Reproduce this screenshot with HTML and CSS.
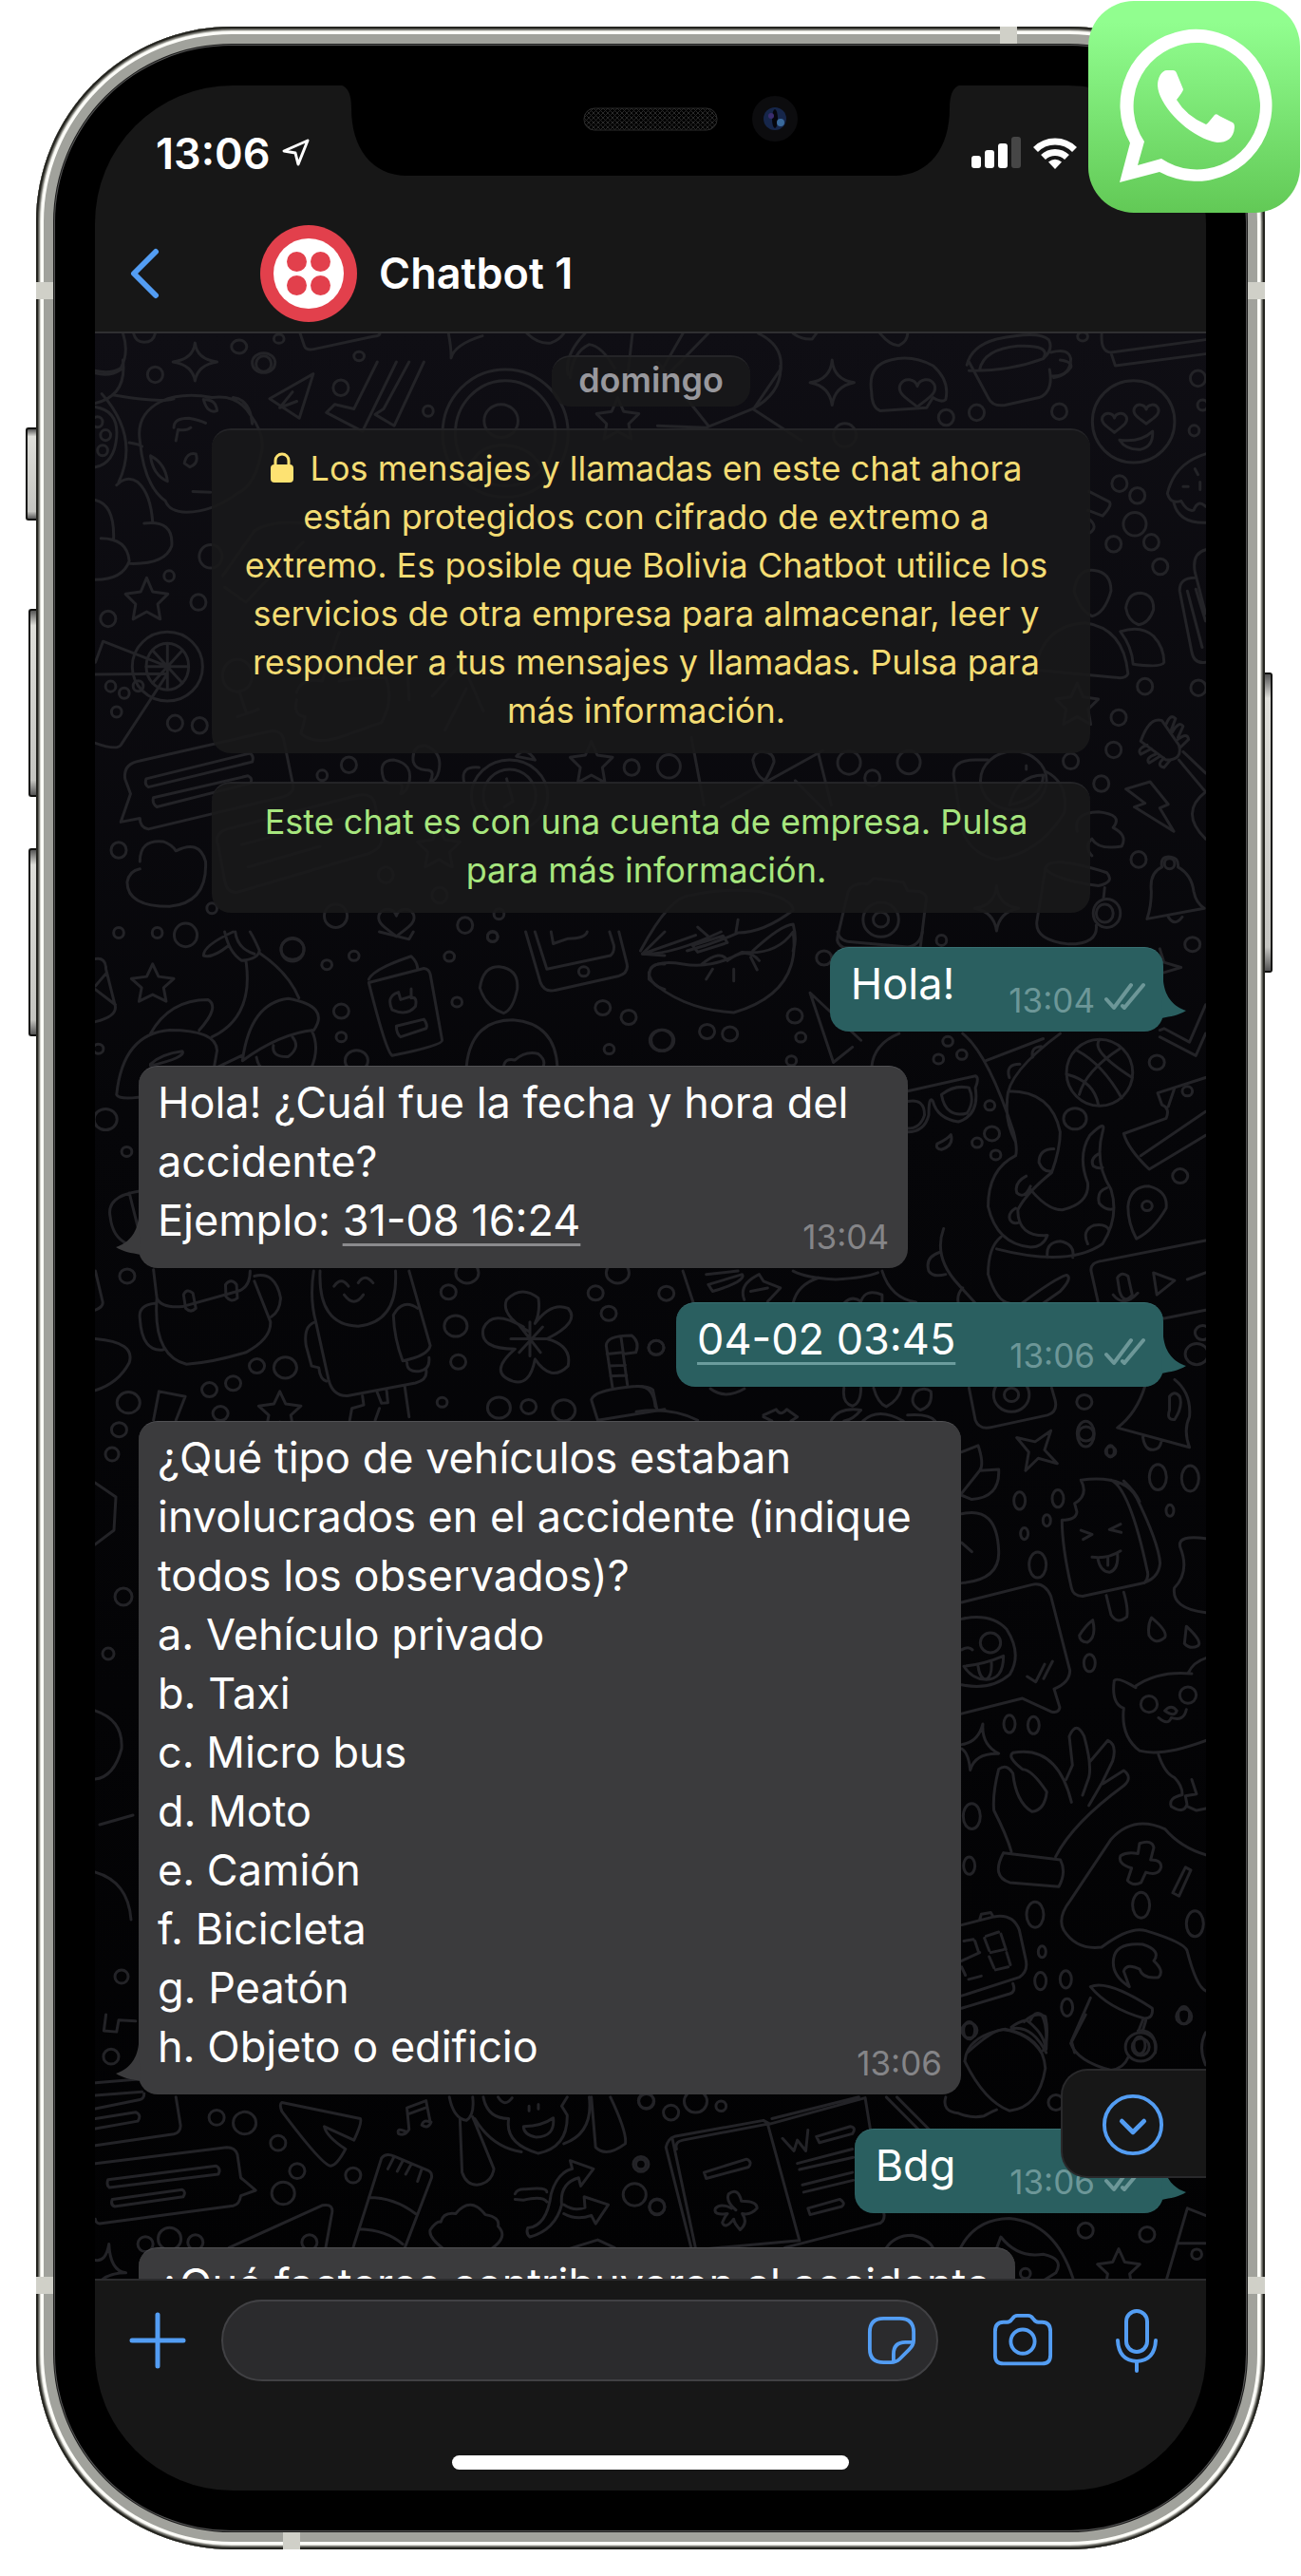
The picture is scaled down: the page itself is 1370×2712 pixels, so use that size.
FILE: index.html
```html
<!DOCTYPE html>
<html lang="es">
<head>
<meta charset="utf-8">
<meta name="viewport" content="width=device-width, initial-scale=1">
<title>Chatbot 1</title>
<link rel="stylesheet" href="styles.css">
</head>
<body>
<main class="stage">
  <div class="phone">
    <i class="key key-mute"></i><i class="key key-up"></i><i class="key key-down"></i><i class="key key-power"></i>
    <i class="band band-top"></i><i class="band band-bottom"></i>
    <i class="band band-left band-high"></i><i class="band band-right band-high"></i>
    <i class="band band-left band-low"></i><i class="band band-right band-low"></i>

    <div class="screen">
      <div class="status">
        <span class="clock">13:06</span>
        <svg class="locate" viewBox="0 0 30 30"><path d="M28 2 3 13 15 15 18 27Z" fill="none" stroke="#fff" stroke-width="3" stroke-linejoin="round"/></svg>
        <svg class="signal" viewBox="0 0 52 34"><g fill="#fff"><rect y="20" width="10" height="13" rx="3"/><rect x="14" y="14" width="10" height="19" rx="3"/><rect x="28" y="7" width="10" height="26" rx="3"/><rect x="42" width="10" height="33" rx="3" fill="#464646"/></g></svg>
        <svg class="wifi" viewBox="0 0 46 34"><g fill="none" stroke="#fff" stroke-width="7"><path d="M2.500 13.500A29 29 0 0 1 43.500 13.500"/><path d="M10.500 21.500A18 18 0 0 1 35.500 21.500"/></g><path d="M16 26.500Q23 21 30 26.500L23 34Z" fill="#fff"/></svg>
      </div>

      <header class="bar">
        <button class="back" aria-label="Atrás"><svg viewBox="0 0 32 54"><path d="M28 4 5 27 28 50" fill="none" stroke="#539df3" stroke-width="6" stroke-linecap="round" stroke-linejoin="round"/></svg></button>
        <svg class="avatar" viewBox="0 0 102 102"><circle cx="51" cy="51" r="51" fill="#e2404c"/><circle cx="51" cy="51" r="37" fill="#fff"/><g fill="#e2404c"><circle cx="38.500" cy="38.500" r="10.500"/><circle cx="63.500" cy="38.500" r="10.500"/><circle cx="38.500" cy="63.500" r="10.500"/><circle cx="63.500" cy="63.500" r="10.500"/></g></svg>
        <h1 class="title">Chatbot 1</h1>
      </header>

      <div class="chat">
        <svg class="wallpaper" viewBox="100 350 1170 2050" preserveAspectRatio="xMidYMin slice" aria-hidden="true">
          <defs>
            <ellipse id="s" rx="12" ry="14"/>
            <ellipse id="m" rx="18" ry="21"/>
            <ellipse id="l" rx="27" ry="31"/>
            <path id="star" d="M0-55 14-18 50-12 26 15 32 55 0 35-32 55-26 15-50-12-14-18Z"/>
            <path id="spark" d="M0-60Q4-8 52 0 6 10 0 60-6 10-52 0-4-8 0-60Z"/>
            <path id="heart" d="M0 40C-20 20-50 5-40-20-30-40-5-35 0-15 5-35 30-40 40-20 50 5 20 20 0 40Z"/>
          </defs>
          <g transform="scale(.4464 .3333)">
            <use href="#spark" x="460" y="1140"/><use href="#m" x="564" y="1092"/><use href="#l" x="622" y="1143"/><use href="#s" x="658" y="1067"/><use href="#s" x="847" y="1122"/>
            <path d="M290 1050Q305 1110 285 1160 260 1180 224 1168M315 1050Q320 1078 340 1078 362 1078 366 1050M708 1050 718 1090Q722 1105 740 1100L880 1060Q900 1056 895 1050M1058 1050Q1065 1100 1064 1128 1072 1085 1138 1058M1243 1050Q1270 1085 1300 1080 1320 1070 1330 1050M1380 1050Q1330 1120 1340 1180M1345 1190Q1350 1110 1390 1085 1420 1090 1450 1160M1492 1050 1480 1190"/>
          </g>
          <g transform="translate(670 0) scale(.4464 .3333)">
            <path d="M110 1050 50 1190M170 1050 75 1180M288 1050Q350 1090 340 1170M370 1050Q390 1070 415 1068L425 1050M575 1050Q600 1090 620 1088 640 1075 640 1050M780 1150Q790 1090 850 1068 950 1040 973 1070 985 1100 960 1130 880 1170 785 1168M810 1165Q820 1100 900 1090 980 1085 960 1130M978 1110Q1020 1095 1025 1130 1025 1180 985 1190M1098 1050Q1095 1110 1120 1110L1343 1070M1120 1112 1130 1152 1343 1115"/><use href="#s" x="1053" y="1060"/>
          </g>
          <g transform="translate(0 380) scale(.4464 .3954)">
            <use href="#m" x="366" y="34"/><use href="#m" x="622" y="5"/><use href="#m" x="804" y="69"/><use href="#s" x="1010" y="131"/><use href="#star" x="1457" y="150"/>
            <path d="M265 88Q380 110 410 98M225 110Q300 90 290-5M225 30Q260 40 285 20M636 98 739 32 706 150ZM690 80 660 122 700 105M890 0 835 125 790 113 770 135 855 185 935 0M965 0 905 125 885 140 930 170 1000 0M240 85Q330 200 280 320M225 120Q280 130 275 200 270 270 225 280M305 215Q330 220 335 225M275 328Q300 300 325 320 355 350 360 425M340 430Q410 420 405 490 390 540 305 537M225 368Q270 380 268 470M238 470Q300 470 305 530 290 580 225 580M330 210Q320 140 380 105 430 80 500 95 560 85 590 140 630 200 615 250 600 330 560 350 500 400 440 400 400 400 390 370 340 330 330 210M410 175Q410 150 445 150 470 155 485 163M415 210 420 180Q440 185 450 175M480 100Q510 100 512 130 490 140 480 100M550 95Q590 100 595 165M355 250Q360 300 395 318 390 270 355 250M435 270Q440 240 462 245 470 270 448 280ZM455 345 497 347"/>
            <ellipse cx="1192" cy="190" rx="148" ry="170"/><ellipse cx="1192" cy="190" rx="118" ry="140"/><ellipse cx="1182" cy="157" rx="40" ry="44"/><path d="M1100 300Q1120 220 1190 222 1260 225 1285 300"/>
            <use href="#s" x="230" y="160"/><use href="#s" x="249" y="195"/><use href="#s" x="242" y="236"/><use href="#l" x="497" y="518"/><use href="#s" x="399" y="570"/><use href="#star" x="346" y="630"/><use href="#m" x="468" y="640"/><use href="#m" x="255" y="684"/><use href="#m" x="413" y="962"/><use href="#m" x="471" y="968"/>
            <ellipse cx="395" cy="811" rx="83" ry="92"/><ellipse cx="395" cy="811" rx="50" ry="62"/><path d="M395 750V872M345 811H445M360 768 430 855M430 768 360 855M225 800 243 744 395 811M225 832 395 830M395 830 285 1020Q275 1035 225 1015"/><use href="#s" x="261" y="864"/><use href="#s" x="293" y="882"/><use href="#s" x="326" y="863"/><use href="#s" x="275" y="932"/>
            <path d="M295 1110Q290 1070 330 1062L630 985Q665 975 670 1010L690 1120Q700 1150 660 1160L350 1244Q330 1240 330 1215L285 1225 308 1150ZM345 1110 590 1042Q600 1050 595 1065L350 1132Q340 1125 345 1110ZM362 1160 585 1102Q598 1110 590 1122L370 1185Q358 1175 362 1160ZM515 1290Q500 1250 550 1240L840 1155Q880 1145 885 1180L900 1270Q900 1300 860 1312L560 1412Q535 1415 530 1380ZM570 1285 810 1215M585 1345 755 1290M330 1330Q330 1270 385 1277 405 1285 415 1302 470 1270 485 1330 490 1440 400 1450 300 1450 300 1385 305 1355 330 1350"/>
            <use href="#s" x="760" y="1101"/><use href="#m" x="823" y="1073"/><path d="M905 1110Q890 1060 930 1060 975 1070 965 1120 960 1145 945 1150 955 1120 935 1122 910 1125 905 1110M975 1065Q970 1020 1005 1022 1045 1040 1035 1090 1030 1115 1015 1117 1028 1085 1005 1087 980 1085 975 1065M1218 1050Q1240 1020 1262 1060ZM1095 1120Q1085 1075 1130 1080"/><ellipse cx="1202" cy="1155" rx="90" ry="95"/><ellipse cx="1202" cy="1155" rx="62" ry="70"/><path d="M1195 1110 1210 1170 1190 1185"/><use href="#star" x="1395" y="1065"/><use href="#m" x="1490" y="1080"/><use href="#star" x="1035" y="1290"/><use href="#m" x="910" y="1366"/><use href="#l" x="792" y="1475"/><use href="#heart" x="935" y="1490"/><use href="#m" x="1037" y="1420"/><use href="#m" x="1097" y="1500"/><use href="#s" x="1162" y="1530"/><use href="#s" x="1177" y="1470"/><use href="#m" x="280" y="1300"/><use href="#s" x="500" y="1455"/><use href="#s" x="280" y="1520"/><use href="#s" x="371" y="1520"/><use href="#l" x="438" y="1526"/><use href="#l" x="690" y="1565"/>
            <path d="M525 570 600 450Q640 420 720 430M530 600 580 640 715 480M700 880Q710 840 760 850L800 720M700 900Q690 940 720 945L710 990Q740 1020 800 1000L900 960Q930 900 910 840 840 840 800 850M1020 890 1090 800 1140 930M1050 980 1100 870M960 800 965 900"/><ellipse cx="560" cy="835" rx="35" ry="43"/><path d="M565 880 580 930M560 945 610 925"/>
          </g>
          <g transform="translate(670 380) scale(.4464 .3954)">
            <use href="#spark" x="462" y="55"/><path d="M555 80Q545 10 600-5 650-20 700 10 740 50 730 100 720 110 700 95L685 122 575 130Q555 120 555 80M785 0 830 95Q840 120 870 115L950 95Q985 80 975 20M1000-5Q1030 0 1025 15 1010 40 980 38M340 10Q345 80 275 125L390 210M340 20 280 120M50 170 165 175 275 125M50 0 170 170"/><use href="#heart" x="663" y="80"/>
            <use href="#m" x="731" y="148"/><use href="#m" x="803" y="135"/><use href="#m" x="998" y="132"/><ellipse cx="1173" cy="159" rx="97" ry="109"/><g transform="translate(1128 160) scale(.7)"><use href="#heart"/></g><g transform="translate(1203 137) scale(.7)"><use href="#heart"/></g><path d="M1140 208Q1190 215 1218 185 1220 225 1190 233 1155 235 1140 208"/>
            <use href="#m" x="1325" y="44"/><use href="#s" x="1336" y="115"/><use href="#s" x="1316" y="183"/><use href="#m" x="1140" y="324"/><use href="#m" x="1182" y="356"/><use href="#l" x="1176" y="432"/><use href="#m" x="1126" y="485"/><use href="#m" x="1215" y="480"/><use href="#m" x="1236" y="545"/><path d="M1343 245Q1270 270 1253 350 1260 380 1285 370 1300 400 1315 395 1325 365 1343 385M1268 375Q1280 430 1343 428M1318 285 1325 300M1330 320V340M1290 332H1302"/>
            <path d="M1033 610Q1040 550 1080 555 1120 560 1120 610 1105 670 1075 677 1045 660 1033 610M1155 655Q1160 615 1190 615 1222 620 1220 660 1210 695 1185 700 1160 690 1155 655M940 820Q960 700 1060 695 1150 710 1160 830 1155 845 1130 840ZM1142 718Q1190 700 1220 730 1245 760 1245 800 1240 815 1172 805 1170 760 1142 718M1343 500Q1310 510 1318 560L1343 670M1318 575Q1280 575 1282 610L1310 770Q1315 805 1343 800M1300 610 1335 760M1320 605 1343 690M1068 345 1115 372Q1125 380 1100 410L1065 395M1070 420Q1090 440 1070 455"/>
            <use href="#star" x="1040" y="910"/><use href="#m" x="1200" y="864"/><use href="#m" x="1326" y="868"/><use href="#m" x="1138" y="947"/><use href="#m" x="1126" y="1033"/><use href="#m" x="1097" y="1123"/><use href="#m" x="1025" y="1063"/><path d="M1190 1010Q1210 945 1240 955L1280 1020Q1290 1060 1250 1060ZM1250 965Q1260 935 1272 950L1262 980M1265 985Q1280 955 1290 970L1278 1000M1278 1005Q1300 985 1303 1005L1285 1025M1205 1020Q1180 1030 1190 1045L1215 1030M1225 1045Q1200 1055 1210 1068L1235 1050M1245 1055Q1225 1075 1245 1080L1260 1060M1280 1060 1343 1145M1290 1038 1343 1095M1343 1145Q1280 1200 1343 1270M1155 1137 1212 1118 1255 1178 1235 1188 1268 1250 1175 1185 1200 1175Z"/>
            <use href="#m" x="1185" y="1325"/><use href="#s" x="1258" y="1336"/><path d="M1240 1345Q1235 1315 1260 1318 1280 1320 1278 1345 1310 1365 1315 1410 1320 1440 1340 1455L1205 1483Q1215 1450 1215 1410 1210 1360 1240 1345M1255 1478Q1270 1505 1288 1478M1040 1250Q1030 1200 1090 1198 1150 1205 1125 1240 1160 1260 1145 1290 1090 1300 1075 1270 1055 1290 1075 1315M965 1350Q970 1310 1110 1360 1130 1385 1090 1395 990 1380 965 1350M965 1350 945 1490Q940 1540 1020 1550 1090 1550 1085 1500M1105 1400 1102 1430"/><ellipse cx="1110" cy="1468" rx="32" ry="38"/><ellipse cx="1105" cy="1468" rx="20" ry="24"/>
            <use href="#l" x="77" y="1077"/><use href="#l" x="502" y="1067"/><use href="#l" x="643" y="1066"/><use href="#m" x="557" y="1108"/><path d="M275 1060Q280 1035 300 1038 325 1040 325 1065 315 1095 303 1115 280 1100 275 1060M130 1000 160 1180M430 1045 460 1180M440 1035 200 1185M375 1115 450 1200M750 1110Q740 1060 800 1060H830M750 1110 770 1250Q790 1310 850 1325 950 1310 1010 1200 1020 1120 965 1090"/><ellipse cx="890" cy="1115" rx="78" ry="78"/><path d="M880 1180Q900 1100 960 1100 960 1160 880 1180M920 1075V1085"/>
            <path d="M475 1530 500 1410Q510 1385 545 1390L560 1375 630 1385 640 1408 670 1410Q690 1420 683 1440L670 1560H490Q470 1550 475 1530"/><ellipse cx="577" cy="1485" rx="42" ry="46"/><ellipse cx="577" cy="1485" rx="18" ry="20"/><use href="#spark" x="850" y="1455"/><use href="#s" x="720" y="1540"/><use href="#l" x="492" y="195"/><path d="M10 1568Q80 1420 130 1420 200 1400 290 1410 370 1430 370 1460 300 1520 240 1520 180 1550 120 1568M145 1505 170 1530M240 1485 235 1520M275 1568Q340 1500 370 1497 380 1540 370 1568"/>
          </g>
          <g transform="translate(0 980) scale(.4464 .3571)">
            <path d="M550 0Q480 40 480 70 500 80 540 40M530 0Q540 60 570 85 610 80 612 55 600 20 590 0M555 0Q560 50 600 65M580 85Q600 250 500 310M612 62Q680 120 705 195M355 300Q400 200 490 200 520 220 470 290M275 480Q290 300 400 290 510 290 512 350L505 400M275 480Q280 495 326 488M355 390Q380 360 430 352 440 370 355 395ZM572 380Q590 210 680 197 780 220 740 290 660 300 572 380M735 290Q755 340 735 400M605 370Q610 400 620 400M645 335Q640 370 680 368 710 340 690 310M515 398 570 365M225 80Q250 75 250 110L272 220Q275 250 225 265M252 120 225 160M225 170 272 215M870 140Q880 110 970 72 985 90 985 110M870 150 1000 108Q1012 110 1015 125L1043 320Q1045 335 925 365 910 350 870 150M970 168 970 195Q985 190 980 220 960 250 925 230 910 190 940 178L945 200 965 192M935 278 1000 258Q1010 275 1005 285L945 310Q935 300 935 278M1132 165Q1140 100 1178 103 1225 110 1220 170 1210 230 1188 240 1145 220 1132 165M1100 400Q1110 260 1210 260 1310 270 1315 400M1188 400Q1190 370 1215 378 1240 350 1270 360 1290 380 1280 400M1240 0 1275 150Q1285 180 1310 172L1460 130Q1485 120 1478 90L1460 0M1262 0 1290 110 1440 70Q1450 60 1448 40L1438 0M1300 0 1305 35 1340 20Q1380 20 1385 0M1515 65 1568 0M1515 65 1568 70M1568 95Q1530 90 1532 130 1540 160 1568 170M895 0 965 22 975 0"/>
            <use href="#star" x="360" y="150"/><use href="#l" x="690" y="51"/><use href="#s" x="771" y="97"/><use href="#s" x="835" y="71"/><use href="#m" x="805" y="234"/><use href="#s" x="805" y="310"/><use href="#l" x="841" y="380"/><use href="#s" x="1060" y="73"/><use href="#s" x="1078" y="207"/><use href="#s" x="1162" y="15"/><use href="#m" x="1422" y="224"/><use href="#m" x="1483" y="252"/><use href="#s" x="1437" y="346"/><use href="#s" x="1377" y="117"/><use href="#l" x="1560" y="320"/><use href="#l" x="249" y="553"/><use href="#s" x="299" y="648"/><use href="#s" x="232" y="345"/>
            <path d="M326 765Q250 780 260 840 265 900 300 920M305 770 325 870M225 1000 242 1090Q245 1105 225 1115M362 996 370 1080Q380 1110 430 1105L560 1060Q590 1050 590 1000M370 1080Q360 1250 440 1275 500 1270 580 1240 640 1200 638 1150L600 1030M368 1095Q325 1100 330 1140 335 1240 385 1232M600 1015Q650 1000 662 1080 660 1120 640 1135M433 1070Q440 1050 455 1065L462 1110Q450 1125 438 1110ZM532 1040Q545 1020 558 1040L560 1080Q545 1095 533 1075ZM740 1000Q730 1080 745 1150L775 1320Q785 1370 820 1368L980 1330Q1010 1320 1005 1290M965 1000 1015 1220Q1010 1250 950 1265 930 1200 928 1130 950 1080 985 1110M960 1270Q960 1300 990 1295 1015 1290 1012 1255M745 1150Q715 1160 722 1220L735 1280 752 1285Q755 1320 770 1325M755 1000Q750 1160 845 1163 940 1150 933 1000M788 1045Q805 1015 822 1045M845 1035Q860 1005 880 1035M812 1070Q835 1110 857 1070M855 1368 858 1395 830 1405 825 1440M890 1358 900 1390 915 1388 912 1352M955 1342 965 1430M885 1440 895 1405M225 1200Q320 1210 305 1270 280 1330 225 1352M375 1355 437 1370 415 1440M375 1355 362 1440"/>
            <path d="M1250 1180Q1180 1130 1195 1085 1230 1040 1270 1080 1275 1120 1262 1155 1300 1090 1340 1110 1370 1150 1290 1200 1350 1220 1340 1280 1300 1330 1262 1260 1250 1340 1210 1325 1150 1300 1215 1230 1130 1230 1140 1170 1160 1110 1235 1165M1250 1150V1250M1205 1200H1295M1225 1160 1275 1240M1280 1165 1225 1240"/>
            <use href="#m" x="300" y="1015"/><use href="#m" x="606" y="1280"/><use href="#l" x="673" y="1285"/><use href="#m" x="494" y="1350"/><use href="#m" x="550" y="1331"/><use href="#l" x="303" y="1388"/><use href="#m" x="520" y="1420"/><use href="#star" x="660" y="1410"/><use href="#m" x="281" y="1468"/><use href="#m" x="1058" y="1062"/><use href="#l" x="1075" y="1162"/><use href="#m" x="1081" y="1268"/><use href="#s" x="1043" y="1387"/><use href="#l" x="1177" y="1403"/><use href="#m" x="1247" y="1400"/><use href="#l" x="1330" y="1411"/><use href="#m" x="1405" y="1065"/><use href="#m" x="1436" y="1125"/><use href="#l" x="1102" y="1005"/><use href="#l" x="1457" y="1005"/><use href="#m" x="1548" y="1226"/>
            <path d="M1445 1345 1430 1220Q1430 1190 1490 1190 1510 1210 1500 1240L1470 1245 1480 1335M1432 1245 1470 1240M1437 1280 1475 1278M1440 1310 1478 1308M1465 1195 1470 1240M1395 1380Q1400 1360 1440 1350 1520 1330 1540 1350L1550 1410M1395 1380 1410 1440 1568 1408"/>
          </g>
          <g transform="translate(670 980) scale(.4464 .3571)">
            <path d="M15 65 140 10M15 65Q80 70 200 0M30 120Q40 80 110 95 180 110 250 60 330 70 370 0 390 180 230 238 110 230 30 140ZM155 95Q200 50 215 85 260 40 290 85M165 140 180 110M230 145V110M285 112 270 75M133 40 205 12 215 32 145 60ZM475 0Q480 30 510 30L640 45Q670 40 675 0M410 180 465 385 510 340M410 180 530 320M555 400Q560 330 620 300M770 300Q830 360 890 590 900 640 895 660 830 700 830 810 850 920 930 930 960 930 970 895 900 900 900 820 920 770 980 710 1000 640 1000 590 980 470 880 470M825 380 960 315M1000 300Q870 420 875 500 870 560 895 620M930 760Q970 820 1005 820 1070 800 1065 740 1040 660 1070 600 1110 550 1100 590 1080 680 1120 760 1140 840 1100 920 1020 990 850 935M830 1010Q830 930 860 900M830 1010Q850 1090 880 1095M880 430Q870 390 905 390M935 370Q930 340 955 338M985 640Q950 640 950 680 960 710 980 705M920 720Q890 740 898 770 915 790 930 750M895 815Q875 830 882 850 890 865 905 855M1090 655Q1070 670 1078 690 1090 700 1100 695M1110 755Q1085 765 1092 800 1105 820 1122 818M1065 920Q1050 880 1080 865 1110 860 1115 880M970 960Q965 915 1000 912 1035 920 1030 960M640 470 800 425Q810 430 800 460 810 540 760 560 710 550 700 500Q690 480 690 540 680 590 640 590M640 500Q680 490 680 540 670 580 640 580M720 480Q750 450 785 460 800 500 780 535 730 550 720 480M710 625Q735 610 742 598 750 630 720 642 705 640 710 625"/>
            <ellipse cx="1093" cy="415" rx="78" ry="98"/><path d="M1040 350Q1100 390 1145 490M1140 345Q1060 410 1045 480M1093 318Q1070 350 1170 430M1015 420Q1080 440 1090 510M1235 50 1245 90 1285 105 1245 120M1235 290 1245 285 1305 325 1343 215M1235 310 1320 365 1343 300M1230 475 1343 430M1230 475 1240 510Q1260 520 1250 550L1150 595Q1160 640 1210 700L1343 600M1190 660 1343 530M1270 460 1255 515M1160 810Q1165 750 1210 750 1255 765 1250 815 1220 880 1180 905 1160 860 1160 810M1090 1095 1073 1000Q1070 975 1100 970L1343 910M1245 1140 1343 1115M1220 1005 1270 1028 1228 1070ZM1300 1025 1343 1005M1135 1020Q1145 1000 1160 1015L1170 1070Q1150 1100 1140 1060ZM1125 1070Q1150 1110 1183 1065"/>
            <use href="#s" x="1205" y="808"/><use href="#l" x="62" y="320"/><use href="#m" x="167" y="294"/><use href="#m" x="221" y="301"/><use href="#m" x="374" y="248"/><use href="#s" x="388" y="311"/><use href="#s" x="366" y="380"/><use href="#m" x="443" y="77"/><use href="#m" x="1312" y="37"/><use href="#s" x="735" y="323"/><use href="#s" x="768" y="362"/><use href="#s" x="713" y="375"/><use href="#s" x="834" y="512"/><use href="#m" x="839" y="595"/><use href="#s" x="804" y="622"/><use href="#s" x="848" y="658"/><use href="#l" x="1035" y="551"/><use href="#m" x="1228" y="385"/><use href="#m" x="1283" y="720"/><use href="#s" x="1300" y="470"/>
            <path d="M110 1000 135 1095M370 1095Q380 1040 430 1020M370 1000Q400 1020 470 1025 540 1020 570 1005M580 1000Q600 1080 660 1092M725 875Q700 960 760 1040L800 1095M715 945Q680 960 690 1000 700 1020 730 1010M770 1050Q755 1070 760 1095M910 1095Q990 1020 1015 1012 1030 1020 1000 1060L960 1095M165 1010 240 1000M170 1040 250 1010Q260 1030 180 1060ZM255 1085Q240 1040 290 1010L300 1030 340 1050 310 1090M270 1060 310 1050M490 1095Q510 1070 530 1090 540 1050 580 1070L580 1095M0 1340Q40 1335 45 1400M0 1415Q80 1400 145 1440M175 1347Q210 1380 255 1347M300 1425 330 1408Q340 1430 355 1408L380 1430 365 1442M300 1430 320 1442M490 1345Q485 1390 510 1398 530 1390 530 1345M560 1345Q570 1390 590 1400 620 1380 625 1345M660 1355Q640 1390 670 1410 700 1400 695 1355 680 1340 660 1355M460 1440Q480 1400 530 1410 510 1440 490 1442M535 1442Q570 1400 630 1442M640 1425Q690 1420 705 1442M785 1345 800 1440Q810 1470 840 1460L970 1425Q995 1415 988 1380L980 1345M1200 1340Q1180 1420 1135 1462L1305 1520Q1290 1470 1305 1430 1310 1360 1270 1320M1195 1490Q1200 1530 1220 1527 1235 1525 1238 1505M1258 1370Q1270 1350 1282 1370 1290 1400 1270 1438 1250 1440 1258 1410Z"/>
            <ellipse cx="885" cy="1365" rx="42" ry="50"/><ellipse cx="885" cy="1365" rx="17" ry="20"/><use href="#m" x="71" y="1066"/><use href="#m" x="47" y="1226"/><use href="#m" x="1057" y="1386"/><use href="#m" x="1061" y="1480"/><use href="#s" x="1119" y="1532"/><use href="#l" x="1322" y="1245"/><use href="#m" x="1336" y="1182"/>
          </g>
          <g transform="translate(900 1480) scale(.3333 .4337)">
            <path d="M512 75 570 85 620 58 600 105 640 138 580 125 540 155 550 110ZM338 110 390 94Q410 140 395 155L338 210M395 155 455 152Q460 220 370 225L338 215M338 260Q450 240 455 350 460 420 338 428M338 330 370 352M715 178Q850 165 890 220 960 330 965 380 960 420 900 430L720 460Q690 460 685 440 655 340 655 275 700 275 702 255L695 235Q740 215 715 178M810 178Q870 200 925 400 930 415 915 428M850 180Q890 210 900 230M715 300 750 310 722 322M840 285 805 298 842 305M750 365Q800 370 840 350M768 368Q775 400 805 402 835 395 830 355M800 365V385M795 458 810 505Q830 530 860 510 865 490 850 450M338 475 560 432Q600 425 620 460L680 640Q680 670 630 685L648 730Q645 745 620 740L530 708 338 745M338 515Q430 500 480 540 530 600 490 650 430 690 338 675M338 590Q360 580 372 590M345 630Q410 625 470 605 470 665 410 662 370 660 345 630M390 630Q395 660 415 662 435 655 432 620M545 655 572 668 600 625M597 660 625 618M1110 320Q1020 310 1028 340 1060 400 1010 440 1000 490 1110 500M710 555Q730 530 752 518 765 560 735 572 710 570 710 555M930 555Q925 530 938 512 990 545 980 560 950 580 930 555M1042 575 1048 533Q1100 570 1085 580 1060 590 1042 575M888 682Q830 655 820 665 810 720 850 732 840 800 900 835 970 850 1110 810M888 678Q960 640 1065 648M1055 645Q1070 620 1110 610M960 755Q990 775 1000 755 1040 765 1048 735M980 738Q1000 720 1018 738 1010 755 980 738M960 845Q980 890 1010 900 1035 920 1035 940M1065 905 1080 940 1045 945M1035 942Q990 950 1000 970 1040 990 1050 965L1045 945M1050 970 1080 980 1110 975M338 820Q390 815 405 770 400 820 455 842 380 840 365 882 360 840 338 830"/>
            <ellipse cx="429" cy="573" rx="32" ry="24"/><ellipse cx="930" cy="722" rx="26" ry="20"/><ellipse cx="1053" cy="700" rx="26" ry="20"/>
            <path d="M495 1080Q480 1040 440 980 435 940 455 880 480 865 500 890 510 960 560 983 600 980 607 935 560 880 530 880 480 850 500 840 640 820 685 960M668 905 688 870 678 800Q700 760 725 800 750 870 740 900L720 943M745 860 800 810Q830 820 815 860L780 915 740 968M785 915 850 883Q880 900 850 920 690 1010 635 1092M470 1083 650 1100Q670 1130 645 1165L490 1155Q430 1140 470 1083M660 1270Q640 1240 680 1200L810 1050Q880 990 980 1025 1030 1070 1110 1088M660 1270Q700 1320 780 1312 870 1260 920 1272 1040 1300 1050 1320 1080 1410 1110 1418M840 1090Q860 1080 895 1085L900 1060Q940 1050 945 1070L935 1100Q970 1100 968 1118 960 1140 920 1130L905 1155Q880 1165 862 1150L875 1120Q830 1110 840 1090M1045 1118 1062 1125 1025 1188 1005 1180ZM338 1258 440 1238Q500 1230 520 1270L540 1340Q550 1370 520 1385L338 1430M395 1245 400 1232 430 1228 438 1238M338 1460 490 1425Q510 1420 500 1400M360 1390 400 1382M338 1345 395 1325M345 1297 375 1293M380 1297 392 1325M338 1360 350 1380M415 1285 455 1275M462 1280 478 1318M410 1290 425 1320M430 1325 470 1318M425 1335 440 1362M480 1325 492 1355M445 1367 485 1360M818 1340Q825 1300 910 1305 970 1320 945 1345 980 1370 960 1385 910 1390 900 1365 860 1350 850 1370L868 1408Q810 1380 818 1340M745 1408Q800 1390 940 1460 945 1485 915 1485 800 1460 745 1408M745 1435 685 1540 695 1568M920 1490 910 1515M895 1515Q955 1510 950 1568M355 1568Q440 1510 470 1512 550 1520 590 1568M495 1510Q560 1500 605 1568M555 1490Q570 1465 590 1475 610 1500 605 1560"/>
            <use href="#l" x="905" y="1210"/><use href="#l" x="1075" y="1255"/><use href="#l" x="730" y="66"/><use href="#s" x="808" y="108"/><use href="#l" x="958" y="171"/><use href="#l" x="1060" y="174"/><use href="#s" x="996" y="252"/><use href="#m" x="521" y="228"/><use href="#m" x="642" y="223"/><use href="#s" x="607" y="276"/><use href="#s" x="536" y="308"/><use href="#l" x="578" y="384"/><use href="#m" x="742" y="622"/><use href="#m" x="489" y="770"/><use href="#m" x="565" y="773"/><use href="#l" x="370" y="994"/><use href="#m" x="362" y="1114"/><use href="#l" x="570" y="1233"/><use href="#s" x="592" y="1323"/><use href="#m" x="587" y="1394"/><use href="#m" x="667" y="1390"/><use href="#m" x="671" y="1458"/><use href="#m" x="1040" y="1477"/><use href="#m" x="362" y="1514"/><use href="#m" x="900" y="1550"/>
          </g>
          <g transform="translate(100 1500)">
            <path d="M0 60 22 75 20 110 0 125M0 300Q30 310 28 340 20 370 0 372M5 420 40 410M0 470Q35 480 38 520"/><circle cx="18" cy="30" r="7"/><circle cx="30" cy="180" r="9"/><circle cx="14" cy="240" r="6"/><circle cx="28" cy="580" r="7"/>
          </g>
          <g transform="translate(0 2120) scale(.4464 .3775)">
            <path d="M245 45 250 0M245 45 275 48 280 15 320 18M225 190 326 180M225 225 335 215M340 220Q340 235 330 237L225 262M225 290 320 272Q335 280 325 297L225 318M415 230 426 310Q425 330 410 333L225 365M225 415 535 370Q555 370 560 390L568 455 603 490 568 505Q565 530 550 533L235 583Q225 580 225 570M255 460 510 422Q522 430 515 445L258 482Q250 475 255 460ZM265 515 430 488Q440 495 432 508L270 535Q260 530 265 515ZM665 245 850 290Q855 300 835 350L765 312Q770 340 815 375 795 420 780 422 760 420 665 270 658 250 665 245M955 325Q935 315 940 332 955 340 965 320L960 260 1005 240 1015 300Q1000 290 995 308 1010 320 1017 300M962 278 1008 258M1060 230Q1070 290 1100 295 1120 280 1115 230M1140 230Q1150 290 1200 290 1190 360 1270 387 1340 370 1338 280L1325 255 1338 230M1175 230Q1190 260 1208 232M1085 290 1090 440Q1100 475 1125 475 1160 470 1165 430L1115 285M1120 290Q1160 370 1230 383M1390 230Q1400 330 1330 360M1395 230 1405 370Q1430 400 1475 360 1480 330 1440 230M1235 312Q1280 310 1305 288 1310 340 1265 342 1235 335 1235 312M1248 255V268M1270 250V263M833 650 900 400Q910 385 930 395L1010 435Q1020 440 1018 455L955 650M870 510Q930 510 980 555M848 598Q910 600 950 640M928 400 915 430M950 408 937 437M970 417 957 445M995 430 985 465M540 650 760 532Q790 525 782 560L768 652M1045 652Q1010 620 1015 600 1030 575 1040 578 1045 550 1075 555 1110 505 1145 558 1180 565 1175 590 1200 620 1160 652M1215 500Q1220 485 1240 487 1290 480 1290 495M1215 515 1235 517Q1280 505 1290 522M1245 595Q1290 590 1300 500 1315 440 1350 430L1345 407 1400 430 1370 478 1365 455Q1320 470 1325 530 1310 600 1250 620 1240 610 1245 595M1330 530Q1355 550 1380 538L1378 508 1435 530 1405 583 1395 560Q1360 575 1330 555M1345 652 1410 628 1450 650M225 685Q250 690 257 640 260 715 297 720 260 720 240 740"/>
            <use href="#m" x="262" y="117"/><use href="#m" x="511" y="287"/><use href="#l" x="577" y="302"/><use href="#m" x="656" y="358"/><use href="#m" x="701" y="436"/><use href="#m" x="833" y="448"/><use href="#l" x="668" y="498"/><use href="#m" x="343" y="640"/><use href="#l" x="400" y="625"/><use href="#m" x="461" y="635"/><use href="#m" x="730" y="635"/><use href="#m" x="1512" y="417"/><use href="#l" x="1497" y="502"/><use href="#m" x="1550" y="535"/><use href="#m" x="1524" y="240"/>
          </g>
          <g transform="translate(670 2120) scale(.4464 .3775)">
            <path d="M70 370Q75 345 90 340L300 295 315 305 540 232 585 560Q585 580 570 583L350 650M85 345 140 652M95 375Q90 355 110 350L310 305 385 630 150 655M70 370 130 652M345 345 372 380 380 350 400 380 405 322M160 440 260 403Q275 410 265 425L165 457ZM425 340 505 312Q520 315 510 332L432 357ZM380 415 510 375M385 432 512 398M392 475 510 440M395 495 512 462M405 540 480 515Q495 525 485 535L410 558ZM235 545Q210 520 218 500 240 480 248 520 285 520 285 540 270 560 250 555 265 580 245 600 230 580 230 570 210 600 203 580 210 560 215 555 180 560 187 540 200 525 225 540M320 290 525 230M590 230 670 325M615 230 695 325M775 130Q780 60 870 40 960 60 965 150 950 260 880 268 820 240 775 130M730 230Q720 270 760 275 790 290 820 283 830 275 850 265M915 20Q940-10 965 5 975 60 960 100M885 35Q900 20 920 15 960 50 965 90M1060 0 1025 80Q1040 130 1120 155 1150 150 1160 120M1195 15 1185 45M1343 50Q1325 90 1343 140M765 650Q800 570 880 568 990 580 1032 742M850 652 860 620Q900 680 960 668 1010 680 990 720L960 742M590 650Q610 615 650 615 690 625 700 650M1300 540 1343 560M1300 540 1250 742M1280 638H1343"/>
            <ellipse cx="1190" cy="90" rx="36" ry="40"/><ellipse cx="1190" cy="90" rx="20" ry="24"/><use href="#star" x="1138" y="708"/><use href="#m" x="786" y="44"/><use href="#m" x="24" y="242"/><use href="#m" x="82" y="273"/><use href="#l" x="140" y="242"/><use href="#s" x="200" y="255"/><use href="#s" x="11" y="417"/><use href="#m" x="49" y="537"/><use href="#m" x="1060" y="602"/><use href="#m" x="1205" y="613"/><use href="#s" x="1322" y="668"/><use href="#s" x="918" y="722"/><use href="#m" x="990" y="245"/><use href="#m" x="1292" y="5"/>
          </g>
        </svg>

        <div class="thread">
          <p class="day">domingo</p>
          <p class="note note-lock"><svg class="padlock" viewBox="0 0 24 32"><path d="M5 15V9A7 7 0 0 1 19 9V15" fill="none" stroke="#fde272" stroke-width="3"/><rect y="13" width="24" height="19" rx="4" fill="#fde272"/></svg>Los mensajes y llamadas en este chat ahora<br>están protegidos con cifrado de extremo a<br>extremo. Es posible que Bolivia Chatbot utilice los<br>servicios de otra empresa para almacenar, leer y<br>responder a tus mensajes y llamadas. Pulsa para<br>más información.</p>
          <p class="note note-firm">Este chat es con una cuenta de empresa. Pulsa<br>para más información.</p>

          <div class="msg out"><p>Hola!</p><span class="meta"><time>13:04</time><svg class="ticks" viewBox="0 0 44 30"><path d="M2 18 10 27 28 3M19 25 21 27 41 3" /></svg></span></div>
          <div class="msg in w-short"><p>Hola! ¿Cuál fue la fecha y hora del<br>accidente?<br>Ejemplo: <a href="#">31-08 16:24</a></p><span class="meta"><time>13:04</time></span></div>
          <div class="msg out"><p><a href="#">04-02 03:45</a></p><span class="meta"><time>13:06</time><svg class="ticks" viewBox="0 0 44 30"><path d="M2 18 10 27 28 3M19 25 21 27 41 3" /></svg></span></div>
          <div class="msg in w-mid"><p>¿Qué tipo de vehículos estaban<br>involucrados en el accidente (indique<br>todos los observados)?<br>a. Vehículo privado<br>b. Taxi<br>c. Micro bus<br>d. Moto<br>e. Camión<br>f. Bicicleta<br>g. Peatón<br>h. Objeto o edificio</p><span class="meta"><time>13:06</time></span></div>
          <div class="msg out"><p>Bdg</p><span class="meta"><time>13:06</time><svg class="ticks" viewBox="0 0 44 30"><path d="M2 18 10 27 28 3M19 25 21 27 41 3" /></svg></span></div>
          <div class="msg in w-long"><p>¿Qué factores contribuyeron al accidente</p></div>
        </div>

        <button class="jump" aria-label="Ir al final"><svg viewBox="0 0 68 68"><g fill="none" stroke="#539df3" stroke-width="4" stroke-linecap="round" stroke-linejoin="round"><circle cx="34" cy="34" r="31"/><path d="M22 30 34 42 46 30" stroke-width="5"/></g></svg></button>
      </div>

      <footer class="composer">
        <form class="row">
          <button type="button" class="tool plus" aria-label="Adjuntar"><svg viewBox="0 0 60 60"><path d="M30 3V57M3 30H57" fill="none" stroke="#539df3" stroke-width="5" stroke-linecap="round"/></svg></button>
          <div class="field">
            <input type="text" aria-label="Mensaje">
            <button type="button" class="tool sticker" aria-label="Stickers"><svg viewBox="0 0 54 54"><g fill="none" stroke="#539df3" stroke-width="4" stroke-linejoin="round"><path d="M51 27V18Q51 3 36 3H18Q3 3 3 18V36Q3 51 18 51H26Q32 51 36 47L46 37Q51 32 51 27Z"/><path d="M29 50V42Q29 29 42 29H50"/></g></svg></button>
          </div>
          <button type="button" class="tool camera" aria-label="Cámara"><svg viewBox="0 0 68 60"><g fill="none" stroke="#539df3" stroke-width="4" stroke-linejoin="round"><path d="M13 10H17Q20 10 22 7L23 6Q25 3 28 3H40Q43 3 45 6L46 7Q48 10 51 10H55Q64 10 64 20V46Q64 55 55 55H13Q4 55 4 46V20Q4 10 13 10Z"/><circle cx="34" cy="31" r="13"/></g></svg></button>
          <button type="button" class="tool mic" aria-label="Grabar audio"><svg viewBox="0 0 48 68"><g fill="none" stroke="#539df3" stroke-width="4" stroke-linecap="round"><rect x="13" y="3" width="22" height="43" rx="11"/><path d="M4 34Q5 55 24 56 43 55 44 34M24 56V66"/></g></svg></button>
        </form>
        <div class="home"></div>
      </footer>
    </div>

    <svg class="notch" viewBox="0 0 660 96"><path d="M0 0C10 0 15 8 15 25 15 65 35 96 74 96H586C625 96 645 65 645 25 645 8 650 0 660 0Z"/><defs><pattern id="mesh" width="5" height="5" patternUnits="userSpaceOnUse"><path d="M0 0 5 5M5 0 0 5" stroke="#2a2a2a" stroke-width="1"/></pattern></defs><rect x="260" y="25" width="140" height="23" rx="11" fill="url(#mesh)" stroke="#2b2b2b"/><circle cx="461" cy="36" r="24" fill="#0c0c0e"/><circle cx="461" cy="36" r="12" fill="#16264a"/><ellipse cx="461" cy="36" rx="3" ry="10" fill="#05060c"/><circle cx="467" cy="40" r="4" fill="#3a6a9c"/><circle cx="457" cy="33" r="3" fill="#3b2d6e"/></svg>
  </div>

  <svg class="logo" viewBox="0 0 224 225" role="img" aria-label="WhatsApp"><defs><linearGradient id="lime" x2="0" y2="1"><stop offset=".1" stop-color="#91fe8f"/><stop offset="1" stop-color="#62c956"/></linearGradient></defs><rect y="1" width="223" height="223" rx="48" fill="url(#lime)"/><path fill="#fff" fill-rule="evenodd" d="M44 150.500A80 80 0 1 1 75 181L33 192ZM59 149 52 174 77 167A66.700 66.700 0 1 0 59 149Z"/><path d="M83 74H89Q92 74 93 77L100 94Q100 96 93 105 103 122 124 131 125 131 133 121 135 119 138 122L152 129Q154 130 154 134C153 146 146 150 136 150 108 146 74 112 73 90 73 82 77 74 83 74Z" fill="#fff"/></svg>
</main>
</body>
</html>
```
FILE: styles.css
```css
* { box-sizing: border-box; margin: 0; padding: 0; }

body {
  background: #fff;
  color: #fff;
  font-family: Inter, "Liberation Sans", sans-serif;
}

button { background: none; border: 0; cursor: pointer; }
svg { display: block; }
a { color: inherit; }

.stage { position: relative; padding: 28px 38px; }

/* Phone body */
.phone {
  position: relative;
  padding: 62px;
  border-radius: 206px;
  background: #000;
  box-shadow:
    inset 0 0 0 2px #24241f,
    inset 0 0 0 3px #5c5c56,
    inset 0 0 0 4px #8a8a84,
    inset 0 0 0 5px #d6d6d0,
    inset 0 0 0 8px #fcfcf8,
    inset 0 0 0 18px #a1a29c,
    inset 0 0 0 19px #1c1c1c,
    inset 0 0 0 20px #555;
}

.key {
  position: absolute;
  left: -8px;
  width: 8px;
  height: 198px;
  border: 2px solid #11110f;
  border-right: 0;
  border-radius: 3px 0 0 3px;
  background: linear-gradient(#555, #deded9 8%, #c4c4c0 92%, #555);
}
.key-mute { top: 422px; left: -11px; width: 11px; height: 98px; }
.key-up { top: 613px; }
.key-down { top: 865px; }
.key-power {
  top: 680px;
  left: auto;
  right: -8px;
  height: 316px;
  border-right: 2px solid #11110f;
  border-left: 0;
  border-radius: 0 3px 3px 0;
}

.band { position: absolute; width: 18px; height: 18px; background: #d0d0c8; }
.band-top { top: 0; right: 261px; }
.band-bottom { bottom: 0; left: 260px; }
.band-left { left: 0; }
.band-right { right: 0; }
.band-high { top: 269px; }
.band-low { bottom: 269px; }

.notch { position: absolute; top: 61px; left: 50%; width: 660px; margin-left: -330px; }

.screen {
  display: flex;
  flex-direction: column;
  aspect-ratio: 1170 / 2532;
  border-radius: 145px;
  overflow: hidden;
  background: #171717;
}

/* Status bar and chat header */
.status {
  display: flex;
  flex: none;
  align-items: center;
  height: 136px;
  padding: 6px 136px 0 64px;
}
.clock { font-size: 45px; font-weight: 600; }
.locate { width: 30px; margin-left: 12px; }
.signal { width: 52px; margin-left: auto; }
.wifi { width: 46px; margin-left: 13px; }

.bar {
  display: flex;
  flex: none;
  align-items: center;
  height: 125px;
  padding-left: 36px;
  border-bottom: 2px solid #2f2f31;
}
.back { width: 32px; }
.avatar { width: 102px; margin: 0 23px 0 106px; }
.title { font-size: 45px; font-weight: 600; }

/* Conversation */
.chat {
  position: relative;
  flex: 1;
  min-height: 0;
  overflow: hidden;
  background: linear-gradient(#0f0e14, #060609 40%, #020203);
}
.wallpaper { position: absolute; inset: 0; width: 100%; height: 100%; }
.wallpaper path, .wallpaper ellipse, .wallpaper circle {
  fill: none;
  stroke: #232327;
  stroke-width: 3px;
  stroke-linecap: round;
  stroke-linejoin: round;
  vector-effect: non-scaling-stroke;
}

.thread {
  position: relative;
  display: flex;
  flex-direction: column;
  gap: 36px;
  padding: 23px 45px 0 46px;
}

.day, .note {
  align-self: center;
  border-top: 2px solid #242427;
  border-radius: 20px;
  background: rgba(25, 25, 26, .88);
  text-align: center;
  white-space: nowrap;
}
.day {
  height: 54px;
  padding: 0 28px;
  margin-bottom: -13px;
  color: #98989d;
  font-size: 36px;
  font-weight: 600;
  line-height: 48px;
}
.note { width: 925px; max-width: 100%; padding: 15px 10px 19px 0; font-size: 36px; line-height: 51px; }
.note-lock { margin-bottom: -6px; color: #f3dc73; }
.note-firm { color: #a7e67e; }
.padlock { display: inline-block; width: 24px; margin-right: 18px; vertical-align: -2px; }

.msg {
  position: relative;
  max-width: 100%;
  border-top: 1px solid #515154;
  border-radius: 20px;
  font-size: 45px;
  line-height: 62px;
  white-space: nowrap;
}
.msg::after {
  content: "";
  position: absolute;
  bottom: 13px;
  width: 26px;
  height: 40px;
  background: inherit;
}
.msg a { text-decoration: underline 3px #8b8b8e; text-underline-offset: 8px; }

.in { align-self: flex-start; padding: 7px 20px 19px; background: #3b3b3d; }
.in::after { left: -24px; clip-path: path("M24 0C22 18 12 27 0 31C8 36 16 37 26 39Z"); }
.in .meta { position: absolute; right: 20px; bottom: 2px; color: #858588; }
.w-short { width: 810px; }
.w-mid { width: 866px; }
.w-long { width: 923px; }

.out {
  display: flex;
  align-self: flex-end;
  gap: 57px;
  height: 89px;
  padding: 7px 18px 0 22px;
  border-color: #387072;
  background: #2a5f60;
}
.out::after { right: -24px; clip-path: path("M2 0C4 18 14 27 26 31C18 36 10 37 0 39Z"); }
.out a { text-decoration-color: #6b9c9d; }

.meta { display: flex; align-items: center; gap: 10px; height: 62px; font-size: 35px; line-height: 42px; }
.out .meta { height: 78px; padding-top: 18px; color: #6d9798; }
.ticks { width: 44px; margin-top: -8px; }
.ticks path { fill: none; stroke: #6d9798; stroke-width: 4px; stroke-linecap: round; stroke-linejoin: round; }

.jump {
  position: absolute;
  right: 0;
  bottom: 106px;
  width: 153px;
  height: 115px;
  padding: 3px 0 0 41px;
  border: 2px solid #29292b;
  border-right: 0;
  border-radius: 28px 0 0 28px;
  background: #171717;
}
.jump svg { width: 66px; }

/* Message composer */
.composer { flex: none; padding: 20px 0 22px; border-top: 2px solid #2b2b2d; }
.row { display: flex; align-items: center; padding: 0 49px 0 36px; }
.tool { flex: none; }
.plus { width: 60px; margin-right: 37px; }
.field {
  display: flex;
  flex: 1;
  align-items: center;
  height: 86px;
  min-width: 0;
  padding: 0 21px 0 40px;
  border: 2px solid #414144;
  border-radius: 43px;
  background: #2b2b2d;
}
.field input {
  flex: 1;
  min-width: 0;
  border: 0;
  outline: 0;
  background: none;
  color: #fff;
  font: 44px Inter, sans-serif;
}
.sticker { width: 52px; }
.camera { width: 66px; margin: 0 63px 0 56px; }
.mic { width: 48px; }
.home { width: 418px; height: 15px; margin: 78px auto 0; border-radius: 8px; background: #fff; }

.logo { position: absolute; top: 0; right: 0; width: 224px; }
```
